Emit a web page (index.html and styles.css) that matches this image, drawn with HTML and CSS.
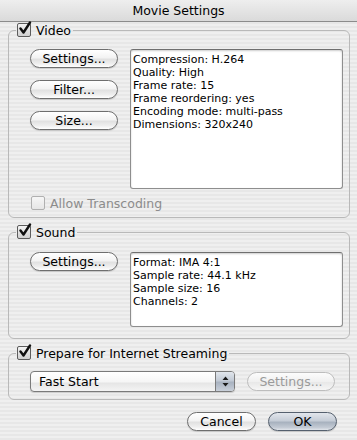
FILE: index.html
```html
<!DOCTYPE html>
<html lang="en">
<head>
    <meta charset="UTF-8">
    <title>Movie Settings</title>
    <link rel="stylesheet" href="styles.css">
</head>
<body>
    <div class="window">
        <div class="titlebar">Movie Settings</div>

        <div class="panel">
            <!-- Video -->
            <fieldset class="group group-video">
                <legend>
                    <label class="check">
                        <span class="box"><svg width="16" height="16" viewBox="0 0 16 16"><path d="M3.5 7.5 L6.5 11.5 L13 1.5" fill="none" stroke="#111" stroke-width="2.4" stroke-linecap="round" stroke-linejoin="round"/></svg></span>
                        Video
                    </label>
                </legend>
                <div class="group-row">
                    <div class="btn-col">
                        <button class="btn">Settings...</button>
                        <button class="btn">Filter...</button>
                        <button class="btn">Size...</button>
                    </div>
                    <div class="info info-video">
                        <div>Compression: H.264</div>
                        <div>Quality: High</div>
                        <div>Frame rate: 15</div>
                        <div>Frame reordering: yes</div>
                        <div>Encoding mode: multi-pass</div>
                        <div>Dimensions: 320x240</div>
                    </div>
                </div>
                <label class="check disabled transcode">
                    <span class="box"></span>
                    Allow Transcoding
                </label>
            </fieldset>

            <!-- Sound -->
            <fieldset class="group group-sound">
                <legend>
                    <label class="check">
                        <span class="box"><svg width="16" height="16" viewBox="0 0 16 16"><path d="M3.5 7.5 L6.5 11.5 L13 1.5" fill="none" stroke="#111" stroke-width="2.4" stroke-linecap="round" stroke-linejoin="round"/></svg></span>
                        Sound
                    </label>
                </legend>
                <div class="group-row">
                    <div class="btn-col">
                        <button class="btn">Settings...</button>
                    </div>
                    <div class="info info-sound">
                        <div>Format: IMA 4:1</div>
                        <div>Sample rate: 44.1 kHz</div>
                        <div>Sample size: 16</div>
                        <div>Channels: 2</div>
                    </div>
                </div>
            </fieldset>

            <!-- Streaming -->
            <fieldset class="group group-stream">
                <legend>
                    <label class="check">
                        <span class="box"><svg width="16" height="16" viewBox="0 0 16 16"><path d="M3.5 7.5 L6.5 11.5 L13 1.5" fill="none" stroke="#111" stroke-width="2.4" stroke-linecap="round" stroke-linejoin="round"/></svg></span>
                        Prepare for Internet Streaming
                    </label>
                </legend>
                <div class="stream-row">
                    <div class="popup">
                        <span class="popup-label">Fast Start</span>
                        <span class="popup-arrows">
                            <svg width="7" height="11" viewBox="0 0 7 11"><path d="M3.5 0.5 L6.5 4 L0.5 4 Z M0.5 7 L6.5 7 L3.5 10.5 Z" fill="#1a1a1a"/></svg>
                        </span>
                    </div>
                    <button class="btn btn-disabled">Settings...</button>
                </div>
            </fieldset>
        </div>

        <div class="footer">
            <button class="btn btn-footer">Cancel</button>
            <button class="btn btn-footer btn-default">OK</button>
        </div>
    </div>
</body>
</html>
```

FILE: styles.css
```css
body {
    margin: 0;
    font-family: 'DejaVu Sans', 'Liberation Sans', sans-serif;
    font-size: 12.5px;
    color: #000;
}
.window {
    width: 357px;
    height: 440px;
    overflow: hidden;
    background: repeating-linear-gradient(#efefef 0px, #efefef 2px, #e7e7e7 2px, #e7e7e7 4px);
}
.titlebar {
    height: 21px;
    line-height: 21px;
    text-align: center;
    font-size: 12.5px;
    background: linear-gradient(#eeeeee, #dadada);
    border-bottom: 1px solid #8c8c8c;
}
.panel {
    padding: 0 7px 0 8px;
}
.group {
    margin: 0;
    border: 1px solid #b9b9b9;
    border-radius: 6px;
    min-width: 0;
}
.group legend {
    padding: 0 2px 0 1px;
    margin-left: -14px;
}
.check {
    display: flex;
    align-items: center;
    gap: 5px;
    height: 16px;
}
.box {
    position: relative;
    width: 12px;
    height: 12px;
    border: 1px solid #5c5c5c;
    border-radius: 2px;
    background: linear-gradient(#f4f4f4, #d0d0d0);
}
.box svg {
    position: absolute;
    left: -1px;
    top: -3px;
}
.check.disabled {
    color: #8c8c8c;
}
.check.disabled .box {
    border-color: #b0b0b0;
    background: linear-gradient(#f6f6f6, #e6e6e6);
}
.group-row {
    display: flex;
    gap: 12px;
}
.btn-col {
    display: flex;
    flex-direction: column;
    gap: 12px;
}
.btn {
    font-family: inherit;
    font-size: 12.5px;
    height: 19px;
    padding: 0;
    color: #000;
    border: 1px solid #6e6e6e;
    border-radius: 10px;
    background: linear-gradient(#ffffff 0%, #f3f3f3 45%, #e1e1e1 55%, #eeeeee 80%, #ffffff 100%);
    box-shadow: 0 1px 1px rgba(0,0,0,0.15);
}
.btn-col .btn {
    width: 88px;
}
.info {
    flex: 1;
    background: #fff;
    border: 1px solid #8e8e8e;
    border-top-color: #6f6f6f;
    border-radius: 3px;
    box-shadow: inset 0 1px 2px rgba(0,0,0,0.2);
    font-size: 11px;
    line-height: 13px;
    padding: 3px 2px;
}

/* Video group */
.group-video {
    padding: 11px 6px 6px 21px;
}
.info-video {
    height: 132px;
}
.transcode {
    margin-top: 6px;
    margin-left: 1px;
}

/* Sound group */
.group-sound {
    margin-top: 6px;
    padding: 12px 6px 11px 21px;
}
.info-sound {
    height: 67px;
}

/* Streaming group */
.group-stream {
    margin-top: 6px;
    padding: 10px 6px 7px 21px;
}
.stream-row {
    display: flex;
    align-items: center;
    gap: 12px;
}
.popup {
    display: flex;
    width: 203px;
    height: 19px;
    border: 1px solid #7a7a7a;
    border-radius: 4px;
    overflow: hidden;
    background: linear-gradient(#ffffff 0%, #f6f6f6 50%, #e6e6e6 60%, #f4f4f4 100%);
    box-shadow: 0 1px 1px rgba(0,0,0,0.15);
}
.popup-label {
    flex: 1;
    line-height: 19px;
    padding-left: 8px;
}
.popup-arrows {
    width: 18px;
    display: flex;
    align-items: center;
    justify-content: center;
    border-left: 1px solid #7a7a7a;
    background: linear-gradient(#e1e6ec 0%, #c2cad5 45%, #a9b3c1 55%, #c9d0da 100%);
}
.btn-disabled {
    width: 88px;
    color: #9a9a9a;
    border-color: #bdbdbd;
    box-shadow: none;
    background: linear-gradient(#fcfcfc, #f0f0f0 50%, #e8e8e8 55%, #f6f6f6);
}

.footer {
    display: flex;
    justify-content: flex-end;
    gap: 12px;
    padding: 12px 20px 0 0;
}
.btn-footer {
    width: 69px;
}
.btn-default {
    border-color: #55606e;
    background: linear-gradient(#e2e6ec 0%, #c6cdd7 45%, #a8b2bf 55%, #c3cad4 85%, #e1e5eb 100%);
}
```
